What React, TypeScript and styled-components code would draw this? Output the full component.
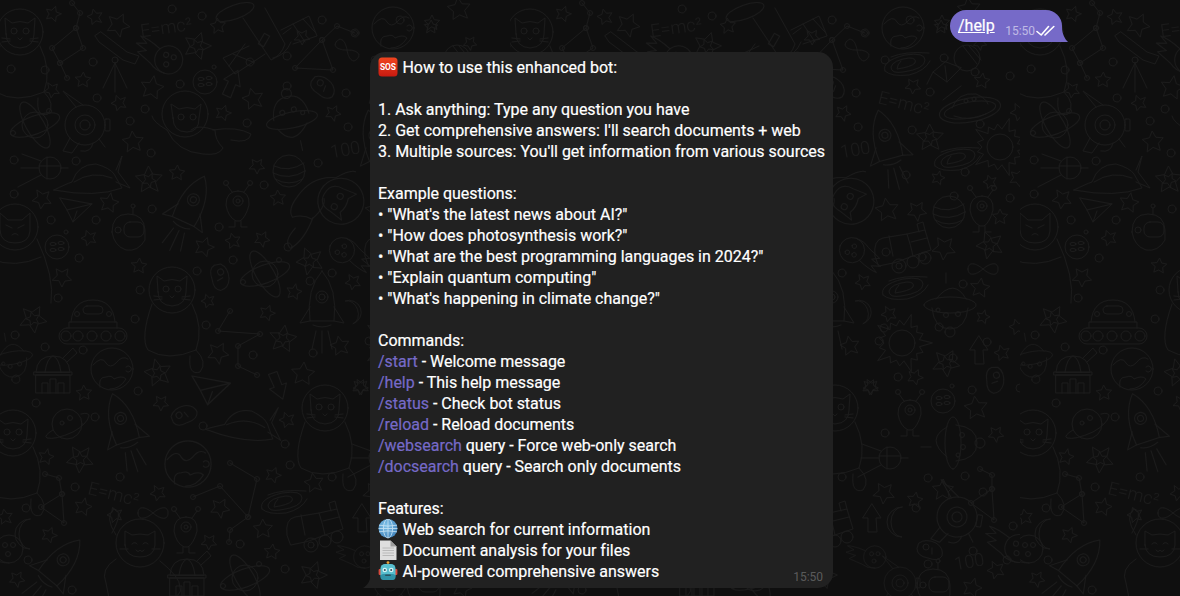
import React from "react";
import styled, { createGlobalStyle } from "styled-components";

const GlobalStyle = createGlobalStyle`
  html, body { margin: 0; padding: 0; background: #0f0f0f; }
  body { font-family: Roboto, "Liberation Sans", sans-serif; }
`;

const Page = styled.main`
  position: relative;
  width: 1180px;
  height: 596px;
  overflow: hidden;
  background: #0f0f0f;
  color: #fff;
  font: 400 16px/21px Roboto, "Liberation Sans", sans-serif;
  letter-spacing: -0.016px;
`;

const Wallpaper = styled.svg`
  position: absolute;
  inset: 0;
  width: 100%;
  height: 100%;
`;

const Doodles = styled.g`
  fill: none;
  stroke: #1b1b1b;
  stroke-width: 1;
  stroke-linejoin: round;
  stroke-linecap: round;
`;

const DoodleText = styled.text`
  fill: #1b1b1b;
  stroke: none;
  font: 300 18px Roboto, sans-serif;
`;

const Thread = styled.section`
  position: relative;
  display: flex;
  flex-direction: column;
  gap: 10px;
  padding: 10px 118px 0 370px;
`;

const OutgoingBubble = styled.article`
  position: relative;
  align-self: flex-end;
  display: flex;
  align-items: flex-start;
  width: 112px;
  height: 32px;
  box-sizing: border-box;
  padding: 5px 0 0 8px;
  background: #766ac8;
  border-radius: 16px 16px 0 16px;
`;

const OutgoingCommand = styled.a`
  color: #fff;
  text-decoration: underline;
  -webkit-text-stroke: 0.2px #fff;
`;

const OutgoingMeta = styled.div`
  display: flex;
  align-items: center;
  gap: 1px;
  margin: 9px 0 0 10.5px;
  height: 14px;
  font-size: 12px;
  line-height: 14px;
  color: rgba(255, 255, 255, 0.55);
`;

const IncomingBubble = styled.article`
  position: relative;
  align-self: flex-start;
  box-sizing: border-box;
  padding: 5px 8px 6px;
  background: #212121;
  border-radius: 15px 15px 15px 0;
  white-space: nowrap;
  -webkit-text-stroke: 0.2px currentColor;
`;

const Line = styled.div`
  height: 21px;
`;

const Command = styled.span`
  color: #766ac8;
`;

const EmojiIcon = styled.svg`
  display: inline-block;
  width: 20px;
  height: 20px;
  margin-right: 0.5px;
  vertical-align: -4px;
`;

const IncomingTime = styled.time`
  position: absolute;
  right: 10px;
  bottom: 4px;
  font-size: 12px;
  line-height: 14px;
  color: rgba(255, 255, 255, 0.27);
  -webkit-text-stroke: 0;
`;

const OutTail = styled.svg`
  position: absolute;
  left: 100%;
  bottom: 0;
  width: 6px;
  height: 15px;
  margin-left: -0.5px;
`;

const InTail = styled.svg`
  position: absolute;
  right: 100%;
  bottom: 0;
  width: 8px;
  height: 15px;
  margin-right: -0.5px;
`;

/* ---------- doodle library ---------- */
const star = (r: number, seed: number) => {
  const pts: string[] = [];
  for (let i = 0; i < 10; i++) {
    const a = (i * Math.PI) / 5 + seed;
    const k = i % 2 ? r * 0.5 : r;
    pts.push(`${(Math.cos(a) * k).toFixed(1)},${(Math.sin(a) * k).toFixed(1)}`);
  }
  return pts.join(" ");
};

const spiky = (() => {
  const p: string[] = [];
  for (let i = 0; i < 30; i++) {
    const a = (i * Math.PI) / 15;
    const k = i % 2 ? 18 : i % 6 === 0 ? 30 : 23;
    p.push(`${(Math.cos(a) * k).toFixed(1)},${(Math.sin(a) * k).toFixed(1)}`);
  }
  return p.join(" ");
})();

const glyphs: Record<string, React.ReactNode> = {
  cat: (
    <>
      <circle r="23" />
      <path d="M-14 2L-15-14-8-9Q0-12 8-9L15-14 14 2Q14 15 0 16-14 15-14 2Z" />
      <circle cx="-6" cy="-1" r="3" />
      <circle cx="6" cy="-1" r="3" />
      <path d="M-2 6L0 8 2 6M-18 6L-10 7M-18 10L-10 9M18 6L10 7M18 10L10 9" />
      <path d="M-20 14Q-32 48-24 60-4 72 24 60 32 38 20 14M24 60Q36 72 28 82 16 86 18 66" />
    </>
  ),
  grump: (
    <>
      <circle r="23" />
      <path d="M-15 4L-15-14-7-7H7L15-14 15 4Q14 16 0 16-14 16-15 4Z" />
      <path d="M-9-2L-3 1M9-2L3 1M-3 8Q0 5 3 8" />
      <path d="M-18 10Q-34 50-30 76M22 12Q40 50 36 76M-24 32Q0 42 26 30" />
    </>
  ),
  floatCat: (
    <>
      <circle cx="-2" cy="-16" r="23" />
      <path d="M-14-12L-16-26-8-21Q0-24 8-21L14-26 12-12Q12 2 0 2-14 2-14-12Z" />
      <circle cx="-6" cy="-13" r="3" />
      <circle cx="6" cy="-13" r="3" />
      <path d="M-35-14Q-34-8-20 0-10 22 16 24 32 26 36 18 28 10 28 0 10-6 4 0M26 0Q50-4 64 4 62 14 44 10" />
    </>
  ),
  rocket: (
    <>
      <path d="M0-34Q16-16 12 16H-12Q-16-16 0-34Z" />
      <circle cy="-8" r="6" />
      <circle cy="-8" r="3" />
      <path d="M-12 2L-22 18-12 16M12 2L22 18 12 16M-9 20Q0 24 9 20M-6 26L-10 44M0 26V48M6 26L10 44" />
    </>
  ),
  dome: (
    <>
      <ellipse rx="26" ry="8" />
      <path d="M-18-3Q-16-24 0-24 16-24 18-3M-16 6Q-4 28 14 6M4 22V32" />
      <circle cy="-27" r="5" />
      <circle cx="-8" cy="-9" r="2.5" />
      <circle cx="4" cy="-10" r="2.5" />
      <circle cx="12" cy="-5" r="2" />
    </>
  ),
  saucer: (
    <>
      <path d="M-38 12Q-26 6-20 4-14-14 4-14 18-10 22-4L30 10Q4 20-38 12ZM24-8L30-22 26-6 38 10 24 4" />
      <path d="M-18 4Q0-8 20 0" />
    </>
  ),
  atom: (
    <>
      <circle r="13" />
      <ellipse rx="26" ry="9" transform="rotate(-20)" />
      <ellipse rx="26" ry="9" transform="rotate(60)" />
      <circle cx="-22" cy="8" r="2.5" />
      <circle cx="14" cy="-14" r="2.5" />
    </>
  ),
  eye: (
    <>
      <circle r="20" />
      <circle r="10" />
      <circle r="5" />
      <path d="M-9-18L-22-34-2-20M-15 13L-22 26-13 28-6 18M14 14L20 22M8 18Q6 28-4 26" />
      <rect x="20" y="-6" width="5" height="12" rx="1" />
    </>
  ),
  sputnik: (
    <>
      <circle r="11" />
      <path d="M-3-11V11M-11-2H11M-29 0H-11M11 0H18M-9 7L-32 19M-9-7L-28-14" />
    </>
  ),
  plane: <path d="M-15-10L17-4-2 14-8 2ZM17-4L-8 2M2 3L-2 14" />,
  helmet: (
    <>
      <path d="M-16 0Q-16-18 0-18 16-18 17-2V8Q10 20-2 18-14 14-16 0Z" />
      <rect x="-4" y="-10" width="20" height="15" rx="6" />
      <circle cx="-10" cy="-2" r="3" />
      <path d="M5-18V-24" />
      <circle cx="5" cy="-26" r="2" />
    </>
  ),
  spotted: (
    <>
      <circle r="12" />
      <ellipse cx="-4" cy="-3" rx="3" ry="1.6" />
      <ellipse cx="4" cy="-4" rx="3" ry="1.6" />
      <ellipse cx="-4" cy="3" rx="3" ry="1.6" />
      <ellipse cx="4" cy="2" rx="3" ry="1.6" />
      <circle cx="9" cy="-15" r="2" />
    </>
  ),
  striped: (
    <>
      <circle r="16" />
      <path d="M-15-5Q0 2 15-8M-16 2Q0 10 16 0M-14 8Q0 16 14 8" />
    </>
  ),
  globe: (
    <>
      <circle r="21" />
      <path d="M-19-4Q-10-14-6-6-2 0 4-6 10-14 16-10M-12 18Q-14 8-6 8 0 6 2 10 10 6 14 10 8 20-2 20M14-2A3 3 0 1 1 14 2" />
    </>
  ),
  tank: (
    <>
      <rect x="-34" y="2" width="68" height="16" rx="8" />
      {[-27, -15, -1, 13, 27].map((x) => (
        <circle key={x} cx={x} cy="10" r="5" />
      ))}
      <path d="M-24 2V-4H24V2M-22-4Q-20-26 0-26 20-26 22-4" />
      <rect x="-10" y="-20" width="20" height="8" rx="4" />
      <circle cx="-16" cy="-12" r="2.5" />
      <circle cx="16" cy="-12" r="2.5" />
    </>
  ),
  observatory: (
    <>
      <path d="M-17-4Q-16-20 0-20 16-20 17-4ZM-8-4Q-6-18 0-20 6-18 8-4M10-18L20-28 24-23 14-14" />
      <rect x="-19" y="-4" width="38" height="3" />
      <rect x="-17" y="-1" width="34" height="18" />
      <path d="M-11 17V7H-5V17M-3 17V3H3V17M5 17V7H11V17" />
    </>
  ),
  sun: (
    <>
      <circle r="13" />
      <polygon points={spiky} />
    </>
  ),
  galaxy: (
    <>
      <path d="M-20 8Q-24-2 0-8 20-11 20-3 20 6-2 9-14 11-14 4-12-3 4-5 12-5 10 0 6 4-8 6-8 2-4-2 4-1" />
      <path d="M-20 8Q-14 14 4 12 20 8 25-2M-14-6Q0-12 24-10" />
    </>
  ),
  infinity: <path d="M-15 0C-15-8-7-6 0 0S15 8 15 0 7-6 0 0-15 8-15 0Z" />,
  bean: (
    <>
      <path d="M-11-7Q-4-12 6-7 14-2 12 6 8 12-2 8-13 6-13-1Z" />
      <path d="M-7-3A3 3 0 1 1-1-3 3 3 0 1 1-7-3M2-2V4" />
    </>
  ),
  moon: <path d="M5-15A15 15 0 1 0 5 15 11 15 0 0 1 5-15Z" />,
  arrow: <path d="M0-14L9 0H4L5 14H-4L-4 0H-9Z" />,
  meteor: (
    <>
      <circle cx="6" r="14" />
      <circle cx="2" cy="-4" r="2.5" />
      <circle cx="10" cy="-4" r="2.5" />
      <circle cx="5" cy="5" r="2.5" />
      <path d="M-6-8Q-20-14-28-14L-20-9-30-6-18-2-26 2-10 9Q-4 14 6 14" />
    </>
  ),
  alien: (
    <>
      <path d="M0-12Q12-12 11 2 8 14 2 18H-2Q-10 14-12 2-12-12 0-12Z" />
      <circle cy="-2" r="5" />
      <circle cy="-2" r="2" />
      <path d="M-6-11L-11-18M6-11L11-18M-3 18V24H-9M3 18V24H9" />
      <circle cx="-12" cy="-20" r="2.5" />
      <circle cx="12" cy="-20" r="2.5" />
    </>
  ),
  rover: (
    <>
      <path d="M-30 6Q-32-10-22-12L2-16Q6-4 8 6-10 14-26 16ZM-16-14L-12 6M2-16L20-20 26 0 8 6M6-8L22-12M14-18L12-26 18-28 20-20" />
      <circle cx="-6" cy="16" r="7" />
      <circle cx="-6" cy="16" r="3" />
      <circle cx="8" cy="12" r="6" />
      <circle cx="20" cy="8" r="6" />
    </>
  ),
  satellite: (
    <>
      <ellipse cx="-22" cy="-18" rx="20" ry="7" transform="rotate(-20 -22 -18)" />
      <path d="M-14-12L14 30Q24 26 28 14L8-22" />
      <rect x="4" y="4" width="6" height="12" transform="rotate(30 7 10)" />
      <path d="M16 28Q28 26 34 12M26 4L34-2M-8 16L-34 28-22 44 8 24M-28 36L-12 14M-24 24L-4 32" />
      <path d="M24 0L52-14 60 6 36 14M36-6L48 12M46-11L58 2" />
    </>
  ),
  telescope: (
    <>
      <path d="M-20-24L-16-18 8 0 20 4 24-4 12-8-14-28Z" />
      <circle r="3" />
      <path d="M0 3L-12 28M0 3V32M0 3L12 28" />
    </>
  ),
  balloon: (
    <>
      <circle cx="10" cy="-12" r="13" />
      <path d="M4-2L-10 12-24 2-12-8ZM-10 12L-12-4M4 16L-14 30M-24 2L-30 14" />
      <path d="M6-24L20-6M12-24L24-10" />
    </>
  ),
  saturn: (
    <>
      <circle r="15" />
      <path d="M-14 6Q-24 12-20 14-12 16 6 8 20 0 22-8 22-12 14-10" />
      <circle cx="3" cy="-6" r="2.5" />
      <circle cx="-5" cy="-1" r="2" />
    </>
  ),
  bigSaturn: (
    <>
      <ellipse rx="26" ry="8" transform="rotate(-10)" />
      <ellipse rx="31" ry="12" transform="rotate(-10)" />
      <path d="M-18-2Q-12-18 6-16 16-12 18-6M-16 6Q0 12 16 4" />
      <circle cx="-4" cy="-9" r="2" />
      <circle cx="4" cy="-11" r="2" />
    </>
  ),
  smile: (
    <>
      <circle r="24" />
      <path d="M-15 2L-15-12-8-8Q0-10 8-8L15-12 15 2Q14 14 0 14-14 14-15 2Z" />
      <path d="M-8 1Q-5-2-3 1M3 1Q5-2 8 1M-4 7Q-2 10 0 7 2 10 4 7M-20 6H-12M20 6H12" />
      <path d="M-24 16Q-40 26-34 40L-30 60M20 18Q40 34 40 44 44 52 26 58M-24-8Q-36-26-26-34-16-32-28-10" />
    </>
  ),
};

type Placed = [string, number, number, number?, number?];
const placed: Placed[] = [
  ["cat", 20, 32, 1, 0], ["telescope", 115, 60], ["meteor", 163, 58, 1, 18],
  ["satellite", 257, 30], ["spotted", 205, 82], ["arrow", 232, 83, 1, 25],
  ["bean", 323, 87, 1, 20], ["dome", 292, 120, 1, -12], ["atom", 35, 125],
  ["eye", 85, 125], ["floatCat", 187, 130], ["striped", 289, 171],
  ["sputnik", 50, 168], ["saucer", 92, 178], ["rocket", 190, 207, 1, 25],
  ["alien", 238, 203], ["floatCat", 326, 195, 1, 120], ["grump", 15, 227],
  ["plane", 75, 208], ["helmet", 128, 232], ["spotted", 57, 247],
  ["meteor", 347, 252, 0.9, 200], ["atom", 265, 274], ["bean", 220, 277, 1, 60],
  ["cat", 172, 290], ["rocket", 322, 305],
  ["tank", 93, 326], ["moon", 353, 311, 0.8, 160], ["observatory", 53, 376],
  ["globe", 112, 369], ["plane", 210, 388, 1.2], ["arrow", 278, 386, 1, 160],
  ["cat", 325, 408], ["saucer", 245, 424, 1, 10], ["bean", 184, 415, 1, -40],
  ["saturn", 67, 424], ["rocket", 123, 426, 1, -18], ["cat", 13, 433],
  ["globe", 188, 464, 1.1], ["infinity", 153, 513], ["galaxy", 282, 501],
  ["rover", 317, 529], ["moon", 25, 534], ["alien", 186, 529],
  ["smile", 140, 543], ["rocket", 58, 566, 1, 40], ["observatory", 187, 579],
  ["atom", 245, 578], ["arrow", 362, 518], ["meteor", 3, 549],
  ["infinity", 347, 50, 0.9, 40], ["globe", 393, 28], ["galaxy", 395, 63],
  ["galaxy", 445, 158], ["galaxy", 393, 287], ["infinity", 473, 269],
  ["balloon", 447, 70], ["bigSaturn", 460, 110], ["rocket", 377, 143, 1, -15],
  ["sun", 490, 147], ["striped", 439, 212], ["alien", 472, 208],
  ["rover", 395, 250], ["sun", 392, 343],
  ["dome", 440, 305, 1, 180], ["bean", 485, 380, 1, 70], ["bean", 420, 550],
  ["spotted", 433, 401], ["alien", 400, 412], ["dome", 443, 443, 1, 90],
  ["sputnik", 380, 458], ["eye", 447, 517, 1, 10], ["meteor", 503, 547, 1, 15],
  ["moon", 387, 522], ["meteor", 360, 557, 0.8], ["eye", 390, 583, 0.8],
  ["helmet", 423, 587], ["arrow", 469, 350], ["dome", 12, 358, 0.8, 170],
];

const stars: [number, number, number][] = [
  [53,14,8],[95,17,8],[118,25,12],[218,26,8],[302,37,8],[83,80,8],[52,90,8],[152,88,12],
  [119,103,8],[223,113,8],[253,99,11],[333,113,8],[133,142,11],[257,166,8],[177,173,8],
  [42,199,10],[109,203,10],[89,238,8],[204,247,10],[233,241,8],[262,239,8],[278,198,8],
  [62,277,10],[139,266,8],[353,282,8],[294,292,8],[208,301,7],[267,313,8],[340,346,10],
  [218,353,11],[84,393,8],[161,403,8],[303,374,12],[361,387,8],[46,457,8],[287,420,8],
  [273,475,8],[314,483,10],[220,508,10],[263,529,10],[209,542,8],[272,552,8],[158,493,8],
  [83,507,9],[115,515,8],[49,535,8],[5,517,8],[17,579,8],[432,23,8],[403,86,8],[472,81,8],
  [509,112,9],[428,178,7],[480,182,7],[508,178,9],[377,210,12],[407,211,10],[490,217,8],
  [434,248,12],[470,288,10],[379,314,8],[473,317,7],[507,327,8],[405,377,8],[466,408,12],
  [486,434,8],[433,490,11],[374,493,11],[405,500,8],[486,570,9],[462,588,10],[492,353,8],
  [360,387,8],[459,9,12],[470,43,7],[431,27,7],
];

const doubleStars: [number, number][] = [
  [197,46],[149,180],[310,261],[33,319],[283,339],[158,373],[80,459],[313,575],
  [420,138],[480,245],[436,363],
];

const dots: [number, number][] = [
  [172,9],[202,16],[322,20],[355,33],[287,56],[250,62],[93,62],[11,69],[45,70],[180,84],
  [287,86],[346,93],[97,98],[145,109],[130,121],[247,123],[348,127],[14,160],[76,161],
  [151,153],[318,163],[264,185],[14,194],[152,209],[51,220],[96,220],[219,227],[288,247],
  [233,260],[79,258],[197,271],[140,290],[332,273],[310,281],[58,298],[135,319],[15,335],
  [45,347],[83,350],[206,325],[313,353],[253,355],[36,403],[138,391],[95,417],[203,426],
  [285,444],[290,465],[120,477],[332,477],[75,487],[26,508],[240,544],[28,560],[285,569],
  [72,590],[400,20],[434,58],[465,72],[375,60],[420,92],[500,76],[402,130],[470,124],
  [396,175],[455,172],[444,196],[500,198],[376,252],[412,257],[453,284],[374,328],[429,327],
  [369,341],[443,358],[477,342],[388,377],[462,390],[510,388],[375,433],[418,478],[455,476],
  [406,508],[473,492],[503,526],[418,564],[463,551],[497,560],
];

const lines: [number, number][][] = [
  [[76,28],[52,48],[60,63],[83,48],[76,28],[80,13],[72,3]],
  [[60,63],[67,78]],
  [[322,40],[295,68],[333,70],[322,40],[337,26],[355,33]],
  [[230,311],[218,331],[260,334],[238,346],[238,366],[257,375]],
  [[45,474],[59,478],[62,494],[41,507],[64,523],[62,494]],
  [[230,463],[257,479],[248,517],[220,486],[193,497]],
  [[248,517],[230,530],[229,542]],
  [[470,469],[482,475],[482,489],[461,503],[484,520],[482,489]],
];

const Doodle = ({ g, x, y, s = 1, r = 0 }: { g: string; x: number; y: number; s?: number; r?: number }) => (
  <g transform={`translate(${x} ${y}) rotate(${r}) scale(${s})`}>{glyphs[g]}</g>
);

const DoodleTile = () => (
  <Doodles>
    {placed.map(([g, x, y, s, r], i) => (
      <Doodle key={i} g={g} x={x} y={y} s={s} r={r} />
    ))}
    {stars.map(([x, y, r], i) => (
      <polygon key={i} transform={`translate(${x} ${y})`} points={star(r, i * 0.7)} />
    ))}
    {doubleStars.map(([x, y], i) => (
      <g key={i} transform={`translate(${x} ${y})`}>
        <polygon points={star(14, i * 0.9)} />
        <polygon points={star(7, i * 0.9 + 0.5)} />
      </g>
    ))}
    {dots.map(([x, y], i) => (
      <circle key={i} cx={x} cy={y} r="4" />
    ))}
    {lines.map((pts, i) => (
      <g key={i}>
        <polyline points={pts.map((p) => p.join(",")).join(" ")} />
        {pts.map(([x, y], j) => (
          <circle key={j} cx={x} cy={y} r="2.5" />
        ))}
      </g>
    ))}
    <DoodleText x="140" y="34" transform="rotate(-8 163 27)">E=mc²</DoodleText>
    <DoodleText x="88" y="500" transform="rotate(14 113 493)">E=mc²</DoodleText>
    <DoodleText x="368" y="108" transform="rotate(14 388 102)">E=mc²</DoodleText>
    <DoodleText x="330" y="156" transform="rotate(-10 343 148)">100</DoodleText>
    <DoodleText x="444" y="568" transform="rotate(-10 457 560)">100</DoodleText>
  </Doodles>
);

const Checks = () => (
  <svg width="19" height="12" viewBox="0 0 19 12" fill="none" stroke="#fff" strokeWidth="1.6" strokeLinecap="round" strokeLinejoin="round">
    <path d="M1 6.5L5.2 10 12.5 1.5M9 10L17.8 1.5" />
  </svg>
);

const SosEmoji = () => (
  <EmojiIcon viewBox="0 0 20 20">
    <defs>
      <linearGradient id="sosG" x1="0" y1="0" x2="0" y2="1">
        <stop offset="0" stopColor="#f0451f" />
        <stop offset="1" stopColor="#c81a10" />
      </linearGradient>
    </defs>
    <rect x="0.5" y="0.5" width="19" height="19" rx="3.5" fill="url(#sosG)" />
    <text x="10" y="13" textAnchor="middle" fill="#fff" stroke="none" fontSize="8.4" fontWeight="700" fontFamily="Roboto, sans-serif">SOS</text>
  </EmojiIcon>
);

const GlobeEmoji = () => (
  <EmojiIcon viewBox="0 0 20 20">
    <defs>
      <radialGradient id="globeG" cx="0.4" cy="0.35" r="0.75">
        <stop offset="0" stopColor="#7fc3ea" />
        <stop offset="1" stopColor="#3d7fb8" />
      </radialGradient>
    </defs>
    <circle cx="10" cy="9.5" r="9.5" fill="url(#globeG)" />
    <g fill="none" stroke="#cfe8f6" strokeWidth="0.9" opacity="0.85">
      <ellipse cx="10" cy="9.5" rx="4.6" ry="9.5" />
      <path d="M10 0V19M1 6.2Q10 8 19 6.2M1 12.8Q10 11 19 12.8M0.6 9.5H19.4" />
    </g>
  </EmojiIcon>
);

const PageEmoji = () => (
  <EmojiIcon viewBox="0 0 20 20">
    <path d="M2 0.5H12.5L18.5 6.5V20H2Z" fill="#dedede" />
    <path d="M12.5 0.5V6.5H18.5Z" fill="#9c9c9c" />
    <path d="M4.5 8H16M4.5 10.5H16M4.5 13H16M4.5 15.5H16" stroke="#b4b4b4" strokeWidth="0.9" />
  </EmojiIcon>
);

const RobotEmoji = () => (
  <EmojiIcon viewBox="0 0 20 20">
    <circle cx="10" cy="1.6" r="1.4" fill="#e8a33a" />
    <rect x="0.6" y="8" width="3" height="6" rx="1" fill="#d9483b" />
    <rect x="16.4" y="8" width="3" height="6" rx="1" fill="#d9483b" />
    <rect x="2.5" y="3" width="15" height="16" rx="4.5" fill="#58bfcf" />
    <rect x="2.5" y="13" width="15" height="6" rx="3" fill="#2f93a8" />
    <circle cx="6.8" cy="9" r="2.3" fill="#d6f3f6" />
    <circle cx="13.2" cy="9" r="2.3" fill="#d6f3f6" />
    <circle cx="6.8" cy="9" r="1" fill="#2b5360" />
    <circle cx="13.2" cy="9" r="1" fill="#2b5360" />
    <rect x="7" y="13.4" width="6" height="1.6" rx="0.8" fill="#2b5360" />
  </EmojiIcon>
);

export default function App() {
  return (
    <Page>
      <GlobalStyle />
      <Wallpaper aria-hidden="true">
        <defs>
          <pattern id="doodles" width="510" height="600" patternUnits="userSpaceOnUse">
            <DoodleTile />
          </pattern>
        </defs>
        <rect width="1180" height="596" fill="url(#doodles)" />
      </Wallpaper>
      <Thread>
        <OutgoingBubble>
          <OutgoingCommand>/help</OutgoingCommand>
          <OutgoingMeta>
            <span>15:50</span>
            <Checks />
          </OutgoingMeta>
          <OutTail viewBox="0 0 6 15">
            <path d="M0 0C0 7 3 12 6 15H0Z" fill="#766ac8" />
          </OutTail>
        </OutgoingBubble>
        <IncomingBubble>
          <Line><SosEmoji /> How to use this enhanced bot:</Line>
          <Line />
          <Line>1. Ask anything: Type any question you have</Line>
          <Line>2. Get comprehensive answers: I'll search documents + web</Line>
          <Line>3. Multiple sources: You'll get information from various sources</Line>
          <Line />
          <Line>Example questions:</Line>
          <Line>• "What's the latest news about AI?"</Line>
          <Line>• "How does photosynthesis work?"</Line>
          <Line>• "What are the best programming languages in 2024?"</Line>
          <Line>• "Explain quantum computing"</Line>
          <Line>• "What's happening in climate change?"</Line>
          <Line />
          <Line>Commands:</Line>
          <Line><Command>/start</Command> - Welcome message</Line>
          <Line><Command>/help</Command> - This help message</Line>
          <Line><Command>/status</Command> - Check bot status</Line>
          <Line><Command>/reload</Command> - Reload documents</Line>
          <Line><Command>/websearch</Command> query - Force web-only search</Line>
          <Line><Command>/docsearch</Command> query - Search only documents</Line>
          <Line />
          <Line>Features:</Line>
          <Line><GlobeEmoji /> Web search for current information</Line>
          <Line><PageEmoji /> Document analysis for your files</Line>
          <Line><RobotEmoji /> AI-powered comprehensive answers</Line>
          <IncomingTime>15:50</IncomingTime>
          <InTail viewBox="0 0 8 15">
            <path d="M8 0C8 7 4 13 0 15H8Z" fill="#212121" />
          </InTail>
        </IncomingBubble>
      </Thread>
    </Page>
  );
}
